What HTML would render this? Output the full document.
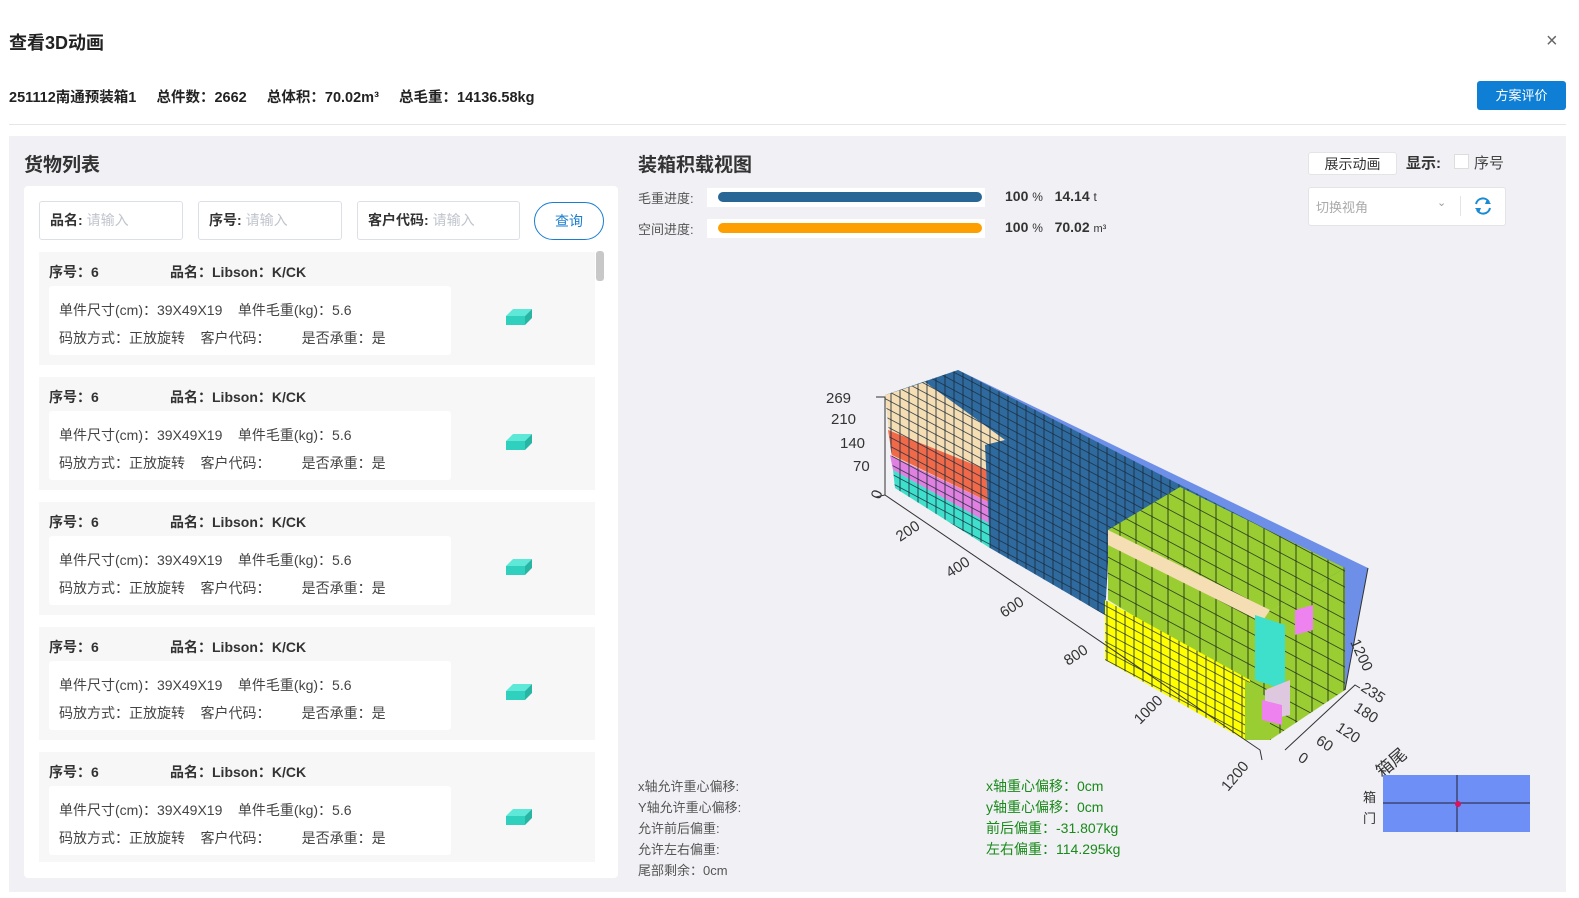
<!DOCTYPE html>
<html><head><meta charset="utf-8">
<style>
*{box-sizing:border-box;margin:0;padding:0}
html,body{width:1579px;height:898px;overflow:hidden}
body{background:#fff;font-family:"Liberation Sans","Noto Sans CJK SC",sans-serif;color:#303133;position:relative}
.a{position:absolute;white-space:nowrap}
.b{font-weight:bold}
.inp{position:absolute;top:201px;height:39px;border:1px solid #dcdfe6;border-radius:3px;background:#fff;font-size:14px;line-height:37px;padding-left:10px;font-weight:bold;color:#333}
.inp span{font-weight:normal;color:#c0c4cc;margin-left:4px}
.item{position:absolute;left:39px;width:556px;height:113px;background:#f7f7f8}
.item .h{position:absolute;top:10px;left:10px;font-size:14px;font-weight:bold;color:#333}
.item .h2{position:absolute;top:10px;left:131px;font-size:14px;font-weight:bold;color:#333}
.item .box{position:absolute;left:10px;top:34px;width:402px;height:69px;background:#fff;border-radius:3px;font-size:14px;color:#444;padding:10px 0 0 10px;line-height:28px}
.item svg{position:absolute;left:466px;top:57px}
.lab{font-size:13px;color:#555}
.gr{font-size:14px;color:#1a8a1a}
</style></head><body>
<div class="a b" style="left:9px;top:29px;font-size:18px;color:#222">查看3D动画</div>
<div class="a" style="left:1546px;top:30px;font-size:20px;color:#666">×</div>
<div class="a b" style="left:9px;top:86px;font-size:14.5px;color:#222">251112南通预装箱1&nbsp;&nbsp;&nbsp;&nbsp;&nbsp;总件数：2662&nbsp;&nbsp;&nbsp;&nbsp;&nbsp;总体积：70.02m³&nbsp;&nbsp;&nbsp;&nbsp;&nbsp;总毛重：14136.58kg</div>
<div class="a" style="left:1477px;top:81px;width:89px;height:29px;background:#0f7fd6;border-radius:3px;color:#fff;font-size:13px;text-align:center;line-height:29px">方案评价</div>
<div class="a" style="left:9px;top:124px;width:1557px;height:1px;background:#e6e6e6"></div>
<div class="a" style="left:9px;top:136px;width:1557px;height:756px;background:#f0f0f5"></div>
<div class="a b" style="left:24px;top:150px;font-size:19px;color:#333">货物列表</div>
<div class="a" style="left:24px;top:186px;width:594px;height:692px;background:#fff;border-radius:4px"></div>
<div class="inp" style="left:39px;width:144px">品名:<span>请输入</span></div>
<div class="inp" style="left:198px;width:144px">序号:<span>请输入</span></div>
<div class="inp" style="left:357px;width:163px">客户代码:<span>请输入</span></div>
<div class="a" style="left:534px;top:202px;width:70px;height:38px;border:1px solid #1a7ecf;border-radius:19px;color:#1a7ecf;font-size:14px;text-align:center;line-height:36px">查询</div>
<div class="a" style="left:596px;top:251px;width:8px;height:30px;background:#c8c8c8;border-radius:3px"></div>
<div class="item" style="top:252px"><div class="h">序号：6</div><div class="h2">品名：Libson：K/CK</div><div class="box">单件尺寸(cm)：39X49X19&nbsp;&nbsp;&nbsp;&nbsp;单件毛重(kg)：5.6<br>码放方式：正放旋转&nbsp;&nbsp;&nbsp;&nbsp;客户代码：&nbsp;&nbsp;&nbsp;&nbsp;&nbsp;&nbsp;&nbsp;&nbsp;是否承重：是</div><svg width="28" height="18"><polygon points="8,0 27,0 20,7 1,7" fill="#5ee8d8"/><polygon points="1,7 20,7 20,16 1,16" fill="#2fd0bd"/><polygon points="20,7 27,0 27,9 20,16" fill="#28b5a4"/></svg></div>
<div class="item" style="top:377px"><div class="h">序号：6</div><div class="h2">品名：Libson：K/CK</div><div class="box">单件尺寸(cm)：39X49X19&nbsp;&nbsp;&nbsp;&nbsp;单件毛重(kg)：5.6<br>码放方式：正放旋转&nbsp;&nbsp;&nbsp;&nbsp;客户代码：&nbsp;&nbsp;&nbsp;&nbsp;&nbsp;&nbsp;&nbsp;&nbsp;是否承重：是</div><svg width="28" height="18"><polygon points="8,0 27,0 20,7 1,7" fill="#5ee8d8"/><polygon points="1,7 20,7 20,16 1,16" fill="#2fd0bd"/><polygon points="20,7 27,0 27,9 20,16" fill="#28b5a4"/></svg></div>
<div class="item" style="top:502px"><div class="h">序号：6</div><div class="h2">品名：Libson：K/CK</div><div class="box">单件尺寸(cm)：39X49X19&nbsp;&nbsp;&nbsp;&nbsp;单件毛重(kg)：5.6<br>码放方式：正放旋转&nbsp;&nbsp;&nbsp;&nbsp;客户代码：&nbsp;&nbsp;&nbsp;&nbsp;&nbsp;&nbsp;&nbsp;&nbsp;是否承重：是</div><svg width="28" height="18"><polygon points="8,0 27,0 20,7 1,7" fill="#5ee8d8"/><polygon points="1,7 20,7 20,16 1,16" fill="#2fd0bd"/><polygon points="20,7 27,0 27,9 20,16" fill="#28b5a4"/></svg></div>
<div class="item" style="top:627px"><div class="h">序号：6</div><div class="h2">品名：Libson：K/CK</div><div class="box">单件尺寸(cm)：39X49X19&nbsp;&nbsp;&nbsp;&nbsp;单件毛重(kg)：5.6<br>码放方式：正放旋转&nbsp;&nbsp;&nbsp;&nbsp;客户代码：&nbsp;&nbsp;&nbsp;&nbsp;&nbsp;&nbsp;&nbsp;&nbsp;是否承重：是</div><svg width="28" height="18"><polygon points="8,0 27,0 20,7 1,7" fill="#5ee8d8"/><polygon points="1,7 20,7 20,16 1,16" fill="#2fd0bd"/><polygon points="20,7 27,0 27,9 20,16" fill="#28b5a4"/></svg></div>
<div class="item" style="top:752px;height:110px"><div class="h">序号：6</div><div class="h2">品名：Libson：K/CK</div><div class="box">单件尺寸(cm)：39X49X19&nbsp;&nbsp;&nbsp;&nbsp;单件毛重(kg)：5.6<br>码放方式：正放旋转&nbsp;&nbsp;&nbsp;&nbsp;客户代码：&nbsp;&nbsp;&nbsp;&nbsp;&nbsp;&nbsp;&nbsp;&nbsp;是否承重：是</div><svg width="28" height="18"><polygon points="8,0 27,0 20,7 1,7" fill="#5ee8d8"/><polygon points="1,7 20,7 20,16 1,16" fill="#2fd0bd"/><polygon points="20,7 27,0 27,9 20,16" fill="#28b5a4"/></svg></div>

<div class="a b" style="left:638px;top:150px;font-size:19px;color:#333">装箱积载视图</div>
<div class="a lab" style="left:638px;top:188px">毛重进度:</div>
<div class="a lab" style="left:638px;top:219px">空间进度:</div>
<div class="a" style="left:707px;top:188px;width:278px;height:19px;background:#fff"></div>
<div class="a" style="left:718px;top:192px;width:264px;height:10px;background:#286795;border-radius:5px"></div>
<div class="a" style="left:707px;top:219px;width:278px;height:19px;background:#fff"></div>
<div class="a" style="left:718px;top:223px;width:264px;height:10px;background:#fd9f00;border-radius:5px"></div>
<div class="a b" style="left:1005px;top:188px;font-size:14px;color:#333">100 <span style="font-weight:normal;font-size:12px">%</span>&nbsp;&nbsp;&nbsp;14.14 <span style="font-weight:normal;font-size:12px">t</span></div>
<div class="a b" style="left:1005px;top:219px;font-size:14px;color:#333">100 <span style="font-weight:normal;font-size:12px">%</span>&nbsp;&nbsp;&nbsp;70.02 <span style="font-weight:normal;font-size:11px">m³</span></div>
<div class="a" style="left:1308px;top:152px;width:89px;height:23px;background:#fff;border:1px solid #e4e4e8;border-radius:3px;font-size:14px;text-align:center;line-height:22px;color:#333">展示动画</div>
<div class="a b" style="left:1406px;top:152px;font-size:15px;color:#333">显示:</div>
<div class="a" style="left:1454px;top:154px;width:15px;height:15px;background:#fff;border:1px solid #ddd"></div>
<div class="a" style="left:1474px;top:152px;font-size:15px;color:#444">序号</div>
<div class="a" style="left:1308px;top:187px;width:198px;height:39px;background:#fff;border:1px solid #e4e4e8;border-radius:3px"></div>
<div class="a" style="left:1316px;top:197px;font-size:13px;color:#aaa">切换视角</div>
<div class="a" style="left:1437px;top:196px;font-size:11px;color:#999">⌄</div>
<div class="a" style="left:1460px;top:196px;width:1px;height:20px;background:#e4e4e8"></div>
<svg class="a" style="left:1472px;top:196px" width="22" height="20" viewBox="0 0 22 20"><path d="M4 8 A7 7 0 0 1 17 6" fill="none" stroke="#1a8ad6" stroke-width="2"/><path d="M18 12 A7 7 0 0 1 5 14" fill="none" stroke="#1a8ad6" stroke-width="2"/><polygon points="15,3 19,8 13,8" fill="#1a8ad6"/><polygon points="7,17 3,12 9,12" fill="#1a8ad6"/></svg>

<svg class="a" style="left:0;top:0" width="1579" height="898">
<defs>
<pattern id="g" width="9" height="9" patternUnits="userSpaceOnUse" patternTransform="skewY(28)"><rect width="9" height="9" fill="none" stroke="#1a2a3a" stroke-width="0.8"/></pattern>
<pattern id="g2" width="16" height="16" patternUnits="userSpaceOnUse" patternTransform="skewY(28)"><rect width="16" height="16" fill="none" stroke="#1a2a1a" stroke-width="0.8"/></pattern>
</defs>
<polygon points="958,370 1368,568 1345,690 1340,580 960,382" fill="#6d8fe8"/>
<polygon points="885,395 958,370 1345,570 1270,610 1108,530 1005,440" fill="#2e6a9e"/>
<polygon points="885,395 958,370 1345,570 1270,610 1108,530 1005,440" fill="url(#g)"/>
<polygon points="885,395 925,382 1005,440 990,548 895,488" fill="#f5deb3"/>
<polygon points="888,430 1000,475 995,505 892,455" fill="#f06a4a"/>
<polygon points="890,455 995,505 992,525 893,470" fill="#e080e0"/>
<polygon points="893,470 992,525 990,548 895,488" fill="#3ee0cc"/>
<polygon points="885,395 925,382 1005,440 990,548 895,488" fill="url(#g)"/>
<polygon points="985,445 1005,440 1110,528 1105,615 990,548" fill="#2e6a9e"/>
<polygon points="985,445 1005,440 1110,528 1105,615 990,548" fill="url(#g)"/>
<polygon points="1108,530 1180,487 1345,568 1270,612" fill="#9acd32"/>
<polygon points="1108,530 1180,487 1345,568 1270,612" fill="url(#g2)" />
<polygon points="1108,530 1270,612 1270,700 1108,600" fill="#9acd32"/>
<polygon points="1108,530 1270,612 1270,700 1108,600" fill="url(#g2)"/>
<polygon points="1108,530 1270,610 1262,622 1108,545" fill="#f5deb3"/>
<polygon points="1105,600 1250,680 1245,740 1105,660" fill="#ffff00"/>
<polygon points="1105,600 1250,680 1245,740 1105,660" fill="url(#g)"/>
<polygon points="1270,612 1345,568 1345,690 1270,740" fill="#9acd32"/>
<polygon points="1270,612 1345,568 1345,690 1270,740" fill="url(#g2)"/>
<polygon points="1245,680 1270,700 1270,740 1245,740" fill="#9acd32"/>
<polygon points="1255,615 1285,625 1285,690 1255,680" fill="#3ee0cc"/>
<polygon points="1295,610 1313,605 1313,630 1295,635" fill="#ee82ee"/>
<polygon points="1265,690 1290,680 1290,715 1265,720" fill="#ddc8e0"/>
<polygon points="1262,700 1282,705 1282,725 1262,720" fill="#ee82ee"/>
<g stroke="#333" stroke-width="1" fill="none">
<path d="M876,397 L885,397 L885,495 L876,497"/>
<path d="M885,495 L1260,750 L1262,760"/>
<path d="M1285,750 L1355,685 L1360,688"/>
<path d="M1345,690 L1368,568"/>
</g>
<g font-size="15" fill="#333" font-family="Liberation Sans,sans-serif">
<text x="826" y="403">269</text><text x="831" y="424">210</text><text x="840" y="448">140</text><text x="853" y="471">70</text>
<text transform="translate(880,500) rotate(-70)">0</text>
<text transform="translate(900,542) rotate(-33)">200</text>
<text transform="translate(950,578) rotate(-33)">400</text>
<text transform="translate(1004,618) rotate(-33)">600</text>
<text transform="translate(1068,666) rotate(-33)">800</text>
<text transform="translate(1140,725) rotate(-45)">1000</text>
<text transform="translate(1228,792) rotate(-50)">1200</text>
<text transform="translate(1350,642) rotate(65)">1200</text>
<text transform="translate(1360,690) rotate(33)">235</text>
<text transform="translate(1353,710) rotate(33)">180</text>
<text transform="translate(1335,730) rotate(33)">120</text>
<text transform="translate(1315,743) rotate(33)">60</text>
<text transform="translate(1297,760) rotate(33)">0</text>
<text transform="translate(1382,778) rotate(-40)" font-size="17">箱尾</text>
</g>
<rect x="1383" y="775" width="147" height="57" fill="#6e8ff5"/>
<line x1="1383" y1="803" x2="1530" y2="803" stroke="#223" stroke-width="1"/>
<line x1="1457" y1="775" x2="1457" y2="832" stroke="#223" stroke-width="1"/>
<circle cx="1458" cy="804" r="3" fill="#e0105a"/>
</svg>
<div class="a" style="left:1363px;top:787px;font-size:13px;color:#333">箱</div>
<div class="a" style="left:1363px;top:808px;font-size:13px;color:#333">门</div>
<div class="a lab" style="left:638px;top:776px;line-height:21px">x轴允许重心偏移:<br>Y轴允许重心偏移:<br>允许前后偏重:<br>允许左右偏重:<br>尾部剩余：0cm</div>
<div class="a gr" style="left:986px;top:776px;line-height:21px">x轴重心偏移：0cm<br>y轴重心偏移：0cm<br>前后偏重：-31.807kg<br>左右偏重：114.295kg</div>
</body></html>
